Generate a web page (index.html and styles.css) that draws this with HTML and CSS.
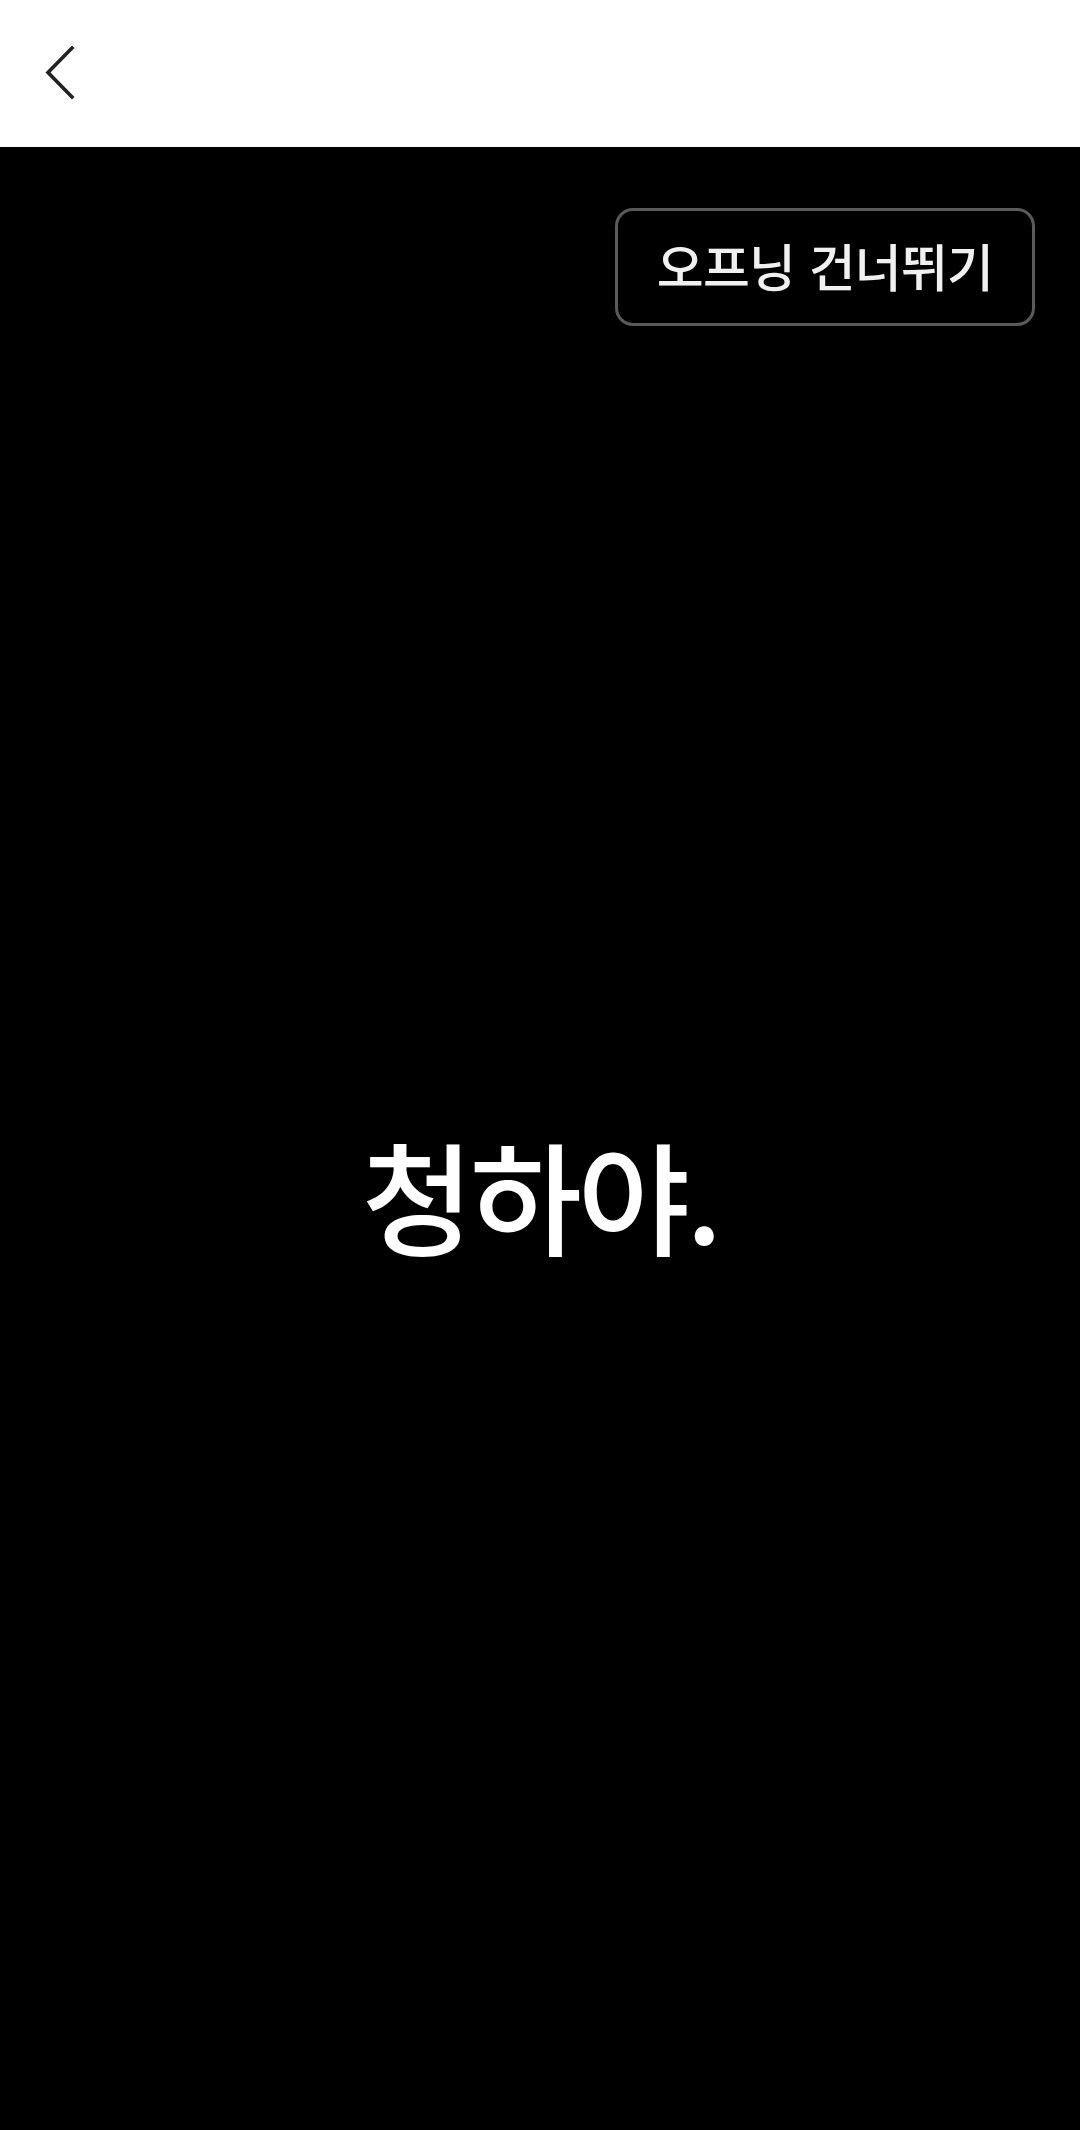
FILE: index.html
```html
<!DOCTYPE html>
<html lang="ko">
<head>
<meta charset="utf-8">
<link rel="stylesheet" href="styles.css">
</head>
<body>
<header class="topbar">
  <button class="back" aria-label="뒤로">
    <svg width="30" height="54" viewBox="0 0 30 54"><path d="M27 2 L3 26.5 L27 51" fill="none" stroke="#222" stroke-width="3.6" stroke-linecap="square"/></svg>
  </button>
</header>
<main class="stage">
  <div class="skip-row">
    <button class="skip">오프닝 건너뛰기</button>
  </div>
  <p class="line">청하야.</p>
</main>
</body>
</html>
```
FILE: styles.css
```css
html, body {
  margin: 0;
  padding: 0;
  background: #000;
  font-family: "Noto Sans CJK KR", "Noto Sans", sans-serif;
}
.topbar {
  height: 147px;
  background: #fff;
  display: flex;
  align-items: center;
  padding-left: 45px;
  box-sizing: border-box;
}
.back {
  background: none;
  border: 0;
  padding: 0;
  width: 30px;
  height: 54px;
  display: flex;
  margin-top: -1px;
}
.stage {
  height: 1983px;
  background: #000;
  display: flex;
  flex-direction: column;
}
.skip-row {
  display: flex;
  justify-content: flex-end;
  padding: 61px 45px 0 0;
}
.skip {
  width: 420px;
  height: 118px;
  box-sizing: border-box;
  background: #000;
  border: 3px solid #5a5a5a;
  border-radius: 18px;
  color: #f0f0f0;
  font-family: "Noto Sans CJK KR", sans-serif;
  font-size: 51px;
  font-weight: 500;
  letter-spacing: -0.8px;
  display: flex;
  align-items: center;
  justify-content: center;
  padding: 0 0 4px 0;
}
.line {
  margin: 797px 0 0 0;
  text-align: center;
  color: #fff;
  font-size: 122px;
  font-weight: 500;
  letter-spacing: -4px;
  line-height: 140px;
}
```
